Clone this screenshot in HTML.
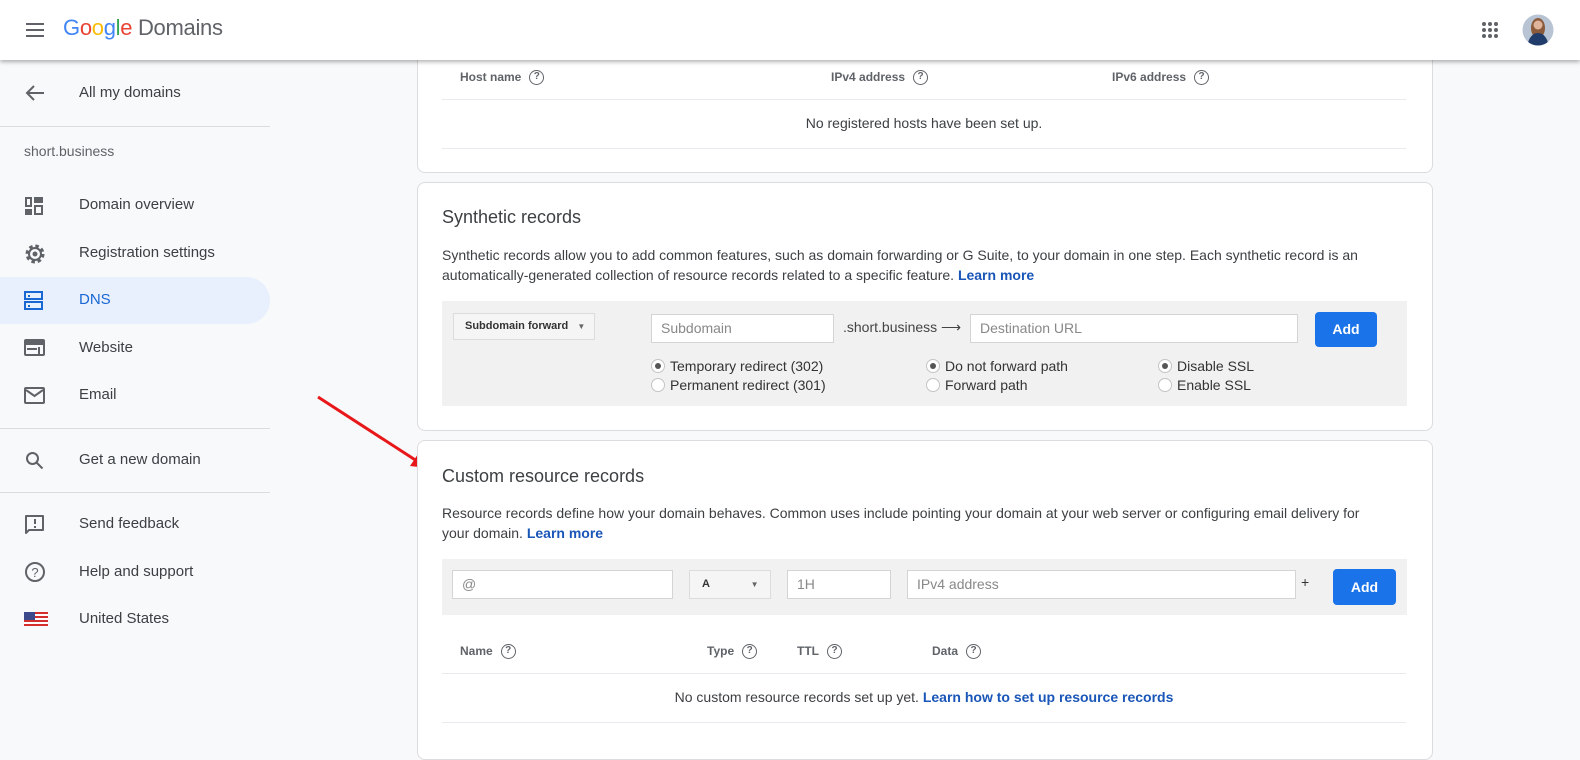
<!DOCTYPE html>
<html><head><meta charset="utf-8"><style>
*{box-sizing:border-box;margin:0;padding:0}
body{width:1580px;height:736px;overflow:hidden;background:#f8f9fa;font-family:"Liberation Sans",Arial,sans-serif;color:#3c4043;position:relative}
.a{position:absolute}
.hdr{left:0;top:0;width:1580px;height:60px;background:#fff;box-shadow:0 2px 4px rgba(0,0,0,.3);z-index:5}
.nav{font-size:15px;color:#3c4043;left:79px}
.ic{left:24px}
.hr{left:0;width:270px;height:1px;background:#dadce0}
.card{background:#fff;border:1px solid #dadce0;border-radius:8px;left:417px;width:1016px}
.t12{font-size:12px;font-weight:bold;color:#5f6368}
.q{display:inline-block;width:15px;height:15px;border:1.5px solid #5f6368;border-radius:50%;font-size:10px;text-align:center;line-height:12px;color:#5f6368;font-weight:bold;vertical-align:middle;margin-left:8px}
.line{height:1px;background:#e8eaed;left:442px;width:964px}
.bar{background:#f1f1f1;left:442px;width:965px}
.inp{background:#fff;border:1px solid #d4d4d4;font-size:14px;color:#888;padding:0 9px;line-height:27px;height:29px}
.btn{background:#1a73e8;color:#fff;font-weight:bold;font-size:14px;border-radius:4px;text-align:center}
.rad{font-size:14px;color:#333;line-height:19px}
.r{display:inline-block;width:14px;height:14px;border:1px solid #c4c4c4;border-radius:50%;background:#fff;vertical-align:-2px;margin-right:5px;position:relative}
.r.c::after{content:"";position:absolute;left:3px;top:3px;width:6px;height:6px;border-radius:50%;background:#555}
.p{font-size:14px;line-height:20px;color:#3c4043}
.lk{color:#1a56b8;font-weight:bold}
</style></head><body>
<div class="a hdr">
 <svg class="a" style="left:26px;top:22px" width="20" height="16"><rect y="1" width="18" height="2" fill="#5f6368"/><rect y="7" width="18" height="2" fill="#5f6368"/><rect y="13" width="18" height="2" fill="#5f6368"/></svg>
 <div class="a" style="left:63px;top:15px;font-size:22px;letter-spacing:-0.3px"><span style="color:#4285f4">G</span><span style="color:#ea4335">o</span><span style="color:#fbbc05">o</span><span style="color:#4285f4">g</span><span style="color:#34a853">l</span><span style="color:#ea4335">e</span> <span style="color:#5f6368">Domains</span></div>
 <svg class="a" style="left:1481px;top:21px" width="18" height="18" fill="#5f6368"><circle cx="3" cy="3" r="2"/><circle cx="9" cy="3" r="2"/><circle cx="15" cy="3" r="2"/><circle cx="3" cy="9" r="2"/><circle cx="9" cy="9" r="2"/><circle cx="15" cy="9" r="2"/><circle cx="3" cy="15" r="2"/><circle cx="9" cy="15" r="2"/><circle cx="15" cy="15" r="2"/></svg>
 <svg class="a" style="left:1522px;top:14px" width="32" height="32"><clipPath id="cp"><circle cx="16" cy="16" r="15.5"/></clipPath><g clip-path="url(#cp)"><rect width="32" height="32" fill="#b8c4d4"/><ellipse cx="16" cy="14" rx="7" ry="10" fill="#8a5a3a"/><circle cx="16" cy="11" r="4.5" fill="#e0b49a"/><path d="M5 32 Q8 19 16 19 Q24 19 27 32Z" fill="#1f3c6a"/></g></svg>
</div>

<!-- sidebar -->
<svg class="a ic" style="top:84px" width="22" height="18"><path d="M20 9H4M10 2L3 9l7 7" stroke="#5f6368" stroke-width="2" fill="none"/></svg>
<div class="a nav" style="top:84px">All my domains</div>
<div class="a hr" style="top:126px"></div>
<div class="a" style="left:24px;top:143px;font-size:14px;color:#5f6368">short.business</div>
<svg class="a ic" style="top:196px" width="20" height="20" fill="#5f6368"><rect x="1" y="1" width="7" height="10"/><rect x="3" y="3" width="3" height="6" fill="#f8f9fa"/><rect x="10" y="1" width="9" height="6"/><rect x="1" y="13" width="7" height="6"/><rect x="10" y="9" width="9" height="10"/><rect x="12" y="11" width="5" height="6" fill="#f8f9fa"/></svg>
<div class="a nav" style="top:196px">Domain overview</div>
<svg class="a ic" style="top:243px" width="22" height="22"><circle cx="11" cy="11" r="8" fill="none" stroke="#5f6368" stroke-width="3" stroke-dasharray="3.5 2.8"/><circle cx="11" cy="11" r="6" fill="none" stroke="#5f6368" stroke-width="2"/><circle cx="11" cy="11" r="2.5" fill="#5f6368"/></svg>
<div class="a nav" style="top:244px">Registration settings</div>
<div class="a" style="left:0;top:277px;width:270px;height:47px;background:#e8f0fe;border-radius:0 24px 24px 0"></div>
<svg class="a ic" style="top:291px" width="20" height="20"><rect x="1" y="1" width="17" height="7" fill="none" stroke="#1967d2" stroke-width="2"/><rect x="1" y="11" width="17" height="7" fill="none" stroke="#1967d2" stroke-width="2"/><rect x="4" y="4" width="2" height="2" fill="#1967d2"/><rect x="4" y="14" width="2" height="2" fill="#1967d2"/></svg>
<div class="a nav" style="top:291px;color:#1967d2">DNS</div>
<svg class="a ic" style="top:339px" width="22" height="18"><rect x="1" y="1" width="19" height="15" rx="1" fill="none" stroke="#5f6368" stroke-width="2"/><rect x="1" y="1" width="19" height="5" fill="#5f6368"/><rect x="3" y="9" width="10" height="2" fill="#5f6368"/><rect x="14" y="8" width="2" height="7" fill="#5f6368"/></svg>
<div class="a nav" style="top:339px">Website</div>
<svg class="a ic" style="top:387px" width="22" height="18"><rect x="1" y="1" width="19" height="15" rx="1" fill="none" stroke="#5f6368" stroke-width="2"/><path d="M2 3l8.5 6L19 3" fill="none" stroke="#5f6368" stroke-width="2"/></svg>
<div class="a nav" style="top:386px">Email</div>
<div class="a hr" style="top:428px"></div>
<svg class="a ic" style="top:450px" width="22" height="22"><circle cx="8.5" cy="8.5" r="5.5" fill="none" stroke="#5f6368" stroke-width="2"/><path d="M12.5 12.5l6 6" stroke="#5f6368" stroke-width="2"/></svg>
<div class="a nav" style="top:451px">Get a new domain</div>
<div class="a hr" style="top:492px"></div>
<svg class="a ic" style="top:514px" width="22" height="22"><path d="M2 2h17v14H5l-3 3z" fill="none" stroke="#5f6368" stroke-width="2" stroke-linejoin="round"/><rect x="10" y="5" width="2" height="5" fill="#5f6368"/><rect x="10" y="12" width="2" height="2" fill="#5f6368"/></svg>
<div class="a nav" style="top:515px">Send feedback</div>
<svg class="a ic" style="top:561px" width="22" height="22"><circle cx="11" cy="11" r="9" fill="none" stroke="#5f6368" stroke-width="2"/><text x="11" y="16" text-anchor="middle" font-size="13" font-family="Liberation Sans" fill="#5f6368">?</text></svg>
<div class="a nav" style="top:563px">Help and support</div>
<svg class="a ic" style="top:612px" width="24" height="14"><rect width="24" height="14" fill="#fff"/><g fill="#d32f2f"><rect y="0" width="24" height="2"/><rect y="4" width="24" height="2"/><rect y="8" width="24" height="2"/><rect y="12" width="24" height="2"/></g><rect width="11" height="8" fill="#3c4a8c"/></svg>
<div class="a nav" style="top:610px">United States</div>

<!-- arrow -->
<svg class="a" style="left:310px;top:390px" width="125" height="90"><line x1="8" y1="7" x2="110" y2="73" stroke="#e8181a" stroke-width="3"/><path d="M117 78L100 76L108 64Z" fill="#e8181a"/></svg>

<!-- card 1 -->
<div class="a card" style="top:30px;height:143px"></div>
<div class="a t12" style="left:460px;top:70px">Host name<span class="q">?</span></div>
<div class="a t12" style="left:831px;top:70px">IPv4 address<span class="q">?</span></div>
<div class="a t12" style="left:1112px;top:70px">IPv6 address<span class="q">?</span></div>
<div class="a line" style="top:99px"></div>
<div class="a" style="left:442px;width:964px;top:115px;text-align:center;font-size:14px;color:#3c4043">No registered hosts have been set up.</div>
<div class="a line" style="top:148px"></div>

<!-- card 2 -->
<div class="a card" style="top:182px;height:249px"></div>
<div class="a" style="left:442px;top:207px;font-size:18px;color:#3c4043">Synthetic records</div>
<div class="a p" style="left:442px;top:245px;width:960px">Synthetic records allow you to add common features, such as domain forwarding or G Suite, to your domain in one step. Each synthetic record is an automatically-generated collection of resource records related to a specific feature. <span class="lk">Learn more</span></div>
<div class="a bar" style="top:301px;height:105px"></div>
<div class="a" style="left:453px;top:313px;width:142px;height:27px;border:1px solid #dcdcdc;background:#f5f5f5;font-size:11px;font-weight:bold;color:#333;line-height:25px;padding-left:11px">Subdomain forward <span style="font-size:8px;color:#666;margin-left:6px">▼</span></div>
<div class="a inp" style="left:651px;top:314px;width:183px">Subdomain</div>
<div class="a" style="left:843px;top:319px;font-size:14px;color:#444">.short.business ⟶</div>
<div class="a inp" style="left:970px;top:314px;width:328px">Destination URL</div>
<div class="a btn" style="left:1315px;top:312px;width:62px;height:35px;line-height:35px">Add</div>
<div class="a rad" style="left:651px;top:357px"><span class="r c"></span>Temporary redirect (302)<br><span class="r"></span>Permanent redirect (301)</div>
<div class="a rad" style="left:926px;top:357px"><span class="r c"></span>Do not forward path<br><span class="r"></span>Forward path</div>
<div class="a rad" style="left:1158px;top:357px"><span class="r c"></span>Disable SSL<br><span class="r"></span>Enable SSL</div>

<!-- card 3 -->
<div class="a card" style="top:440px;height:320px"></div>
<div class="a" style="left:442px;top:466px;font-size:18px;color:#3c4043">Custom resource records</div>
<div class="a p" style="left:442px;top:503px;width:945px">Resource records define how your domain behaves. Common uses include pointing your domain at your web server or configuring email delivery for your domain. <span class="lk">Learn more</span></div>
<div class="a bar" style="top:559px;height:56px"></div>
<div class="a inp" style="left:452px;top:570px;width:221px">@</div>
<div class="a" style="left:689px;top:570px;width:82px;height:29px;border:1px solid #dcdcdc;background:#f5f5f5;font-size:11px;font-weight:bold;color:#333;line-height:27px;padding-left:12px">A <span style="font-size:8px;color:#666;margin-left:38px">▼</span></div>
<div class="a inp" style="left:787px;top:570px;width:104px">1H</div>
<div class="a inp" style="left:907px;top:570px;width:389px">IPv4 address</div>
<div class="a" style="left:1301px;top:574px;font-size:14px;color:#333">+</div>
<div class="a btn" style="left:1333px;top:569px;width:63px;height:36px;line-height:36px">Add</div>
<div class="a t12" style="left:460px;top:644px">Name<span class="q">?</span></div>
<div class="a t12" style="left:707px;top:644px">Type<span class="q">?</span></div>
<div class="a t12" style="left:797px;top:644px">TTL<span class="q">?</span></div>
<div class="a t12" style="left:932px;top:644px">Data<span class="q">?</span></div>
<div class="a line" style="top:673px"></div>
<div class="a" style="left:442px;width:964px;top:689px;text-align:center;font-size:14px;color:#3c4043">No custom resource records set up yet. <span class="lk">Learn how to set up resource records</span></div>
<div class="a line" style="top:722px"></div>
</body></html>
